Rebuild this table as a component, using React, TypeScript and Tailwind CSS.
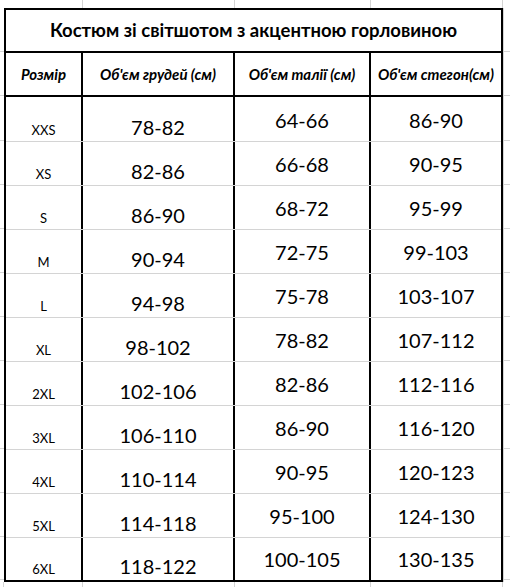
const rows = [
  { size: 'XXS', chest: '78-82', waist: '64-66', hips: '86-90' },
  { size: 'XS', chest: '82-86', waist: '66-68', hips: '90-95' },
  { size: 'S', chest: '86-90', waist: '68-72', hips: '95-99' },
  { size: 'M', chest: '90-94', waist: '72-75', hips: '99-103' },
  { size: 'L', chest: '94-98', waist: '75-78', hips: '103-107' },
  { size: 'XL', chest: '98-102', waist: '78-82', hips: '107-112' },
  { size: '2XL', chest: '102-106', waist: '82-86', hips: '112-116' },
  { size: '3XL', chest: '106-110', waist: '86-90', hips: '116-120' },
  { size: '4XL', chest: '110-114', waist: '90-95', hips: '120-123' },
  { size: '5XL', chest: '114-118', waist: '95-100', hips: '124-130' },
  { size: '6XL', chest: '118-122', waist: '100-105', hips: '130-135' }
]

// row heights inside the table (bottom border included)
const rowHeights = ['h-[45px]', 'h-[44px]', 'h-[44px]', 'h-[44px]', 'h-[44px]', 'h-[44px]', 'h-[44px]', 'h-[44px]', 'h-[44px]', 'h-[44px]', 'h-[42px]']

// little excel gridline stubs round the table
const sideStubs = ['h-[44px]', 'h-[44px]', 'h-[45px]', 'h-[44px]', 'h-[44px]', 'h-[44px]', 'h-[44px]', 'h-[44px]', 'h-[44px]', 'h-[44px]', 'h-[44px]', 'h-[44px]', 'h-[43px]']

const headers = ['Розмір', "Об'єм грудей (см)", "Об'єм талії (см)", "Об'єм стегон(см)"]

const App = () => {
  const stubCols = (
    <div className="grid grid-cols-[79px_152px_136px_132px] h-full">
      <div className="border-r border-[#d4d4d4]"></div>
      <div className="border-r border-[#d4d4d4]"></div>
      <div className="border-r border-[#d4d4d4]"></div>
      <div className="border-r border-[#d4d4d4]"></div>
    </div>
  )

  const stubRows = (
    <div className="flex flex-col">
      {sideStubs.map((h, i) => (
        <div key={'stub' + i} className={`${h} border-b border-[#d4d4d4]`}></div>
      ))}
    </div>
  )

  return (
    <div className="w-[510px] h-[587px] bg-white text-black overflow-hidden grid grid-cols-[4px_499px_7px] grid-rows-[8px_574px_5px] font-['Lato','Noto_Sans',sans-serif]">
      <div></div>
      {stubCols}
      <div></div>

      {stubRows}

      <div className="border-2 border-black flex flex-col">
        <div className="h-[43px] border-b-2 border-black flex items-center justify-center">
          <span className="text-[18.5px] font-bold leading-none whitespace-nowrap">Костюм зі світшотом з акцентною горловиною</span>
        </div>

        <div className="h-[44px] border-b-2 border-black grid grid-cols-[77px_152px_136px_130px]">
          {headers.map((h, i) => (
            <div key={'h' + i} className={`flex items-center justify-center ${i < 3 ? 'border-r-2 border-black' : ''}`}>
              <span className="text-[15px] font-bold italic leading-none whitespace-nowrap">{h}</span>
            </div>
          ))}
        </div>

        {rows.map((r, i) => (
          <div key={r.size} className={`${rowHeights[i]} grid grid-cols-[77px_152px_136px_130px] ${i < rows.length - 1 ? 'border-b border-[#d4d4d4]' : ''}`}>
            <div className="border-r-2 border-black flex items-end justify-center pb-[4px]">
              <span className="text-[13px] leading-none">{r.size}</span>
            </div>
            <div className="border-r-2 border-black flex items-end justify-center pb-[4px]">
              <span className="text-[20px] leading-none">{r.chest}</span>
            </div>
            <div className="border-r-2 border-black flex items-end justify-center pb-[11px]">
              <span className="text-[20px] leading-none">{r.waist}</span>
            </div>
            <div className="flex items-end justify-center pb-[11px]">
              <span className="text-[20px] leading-none">{r.hips}</span>
            </div>
          </div>
        ))}
      </div>

      <div className="border-l border-[#d4d4d4]">{stubRows}</div>

      <div className="border-r border-[#d4d4d4]"></div>
      {stubCols}
      <div></div>
    </div>
  )
}

export default App
